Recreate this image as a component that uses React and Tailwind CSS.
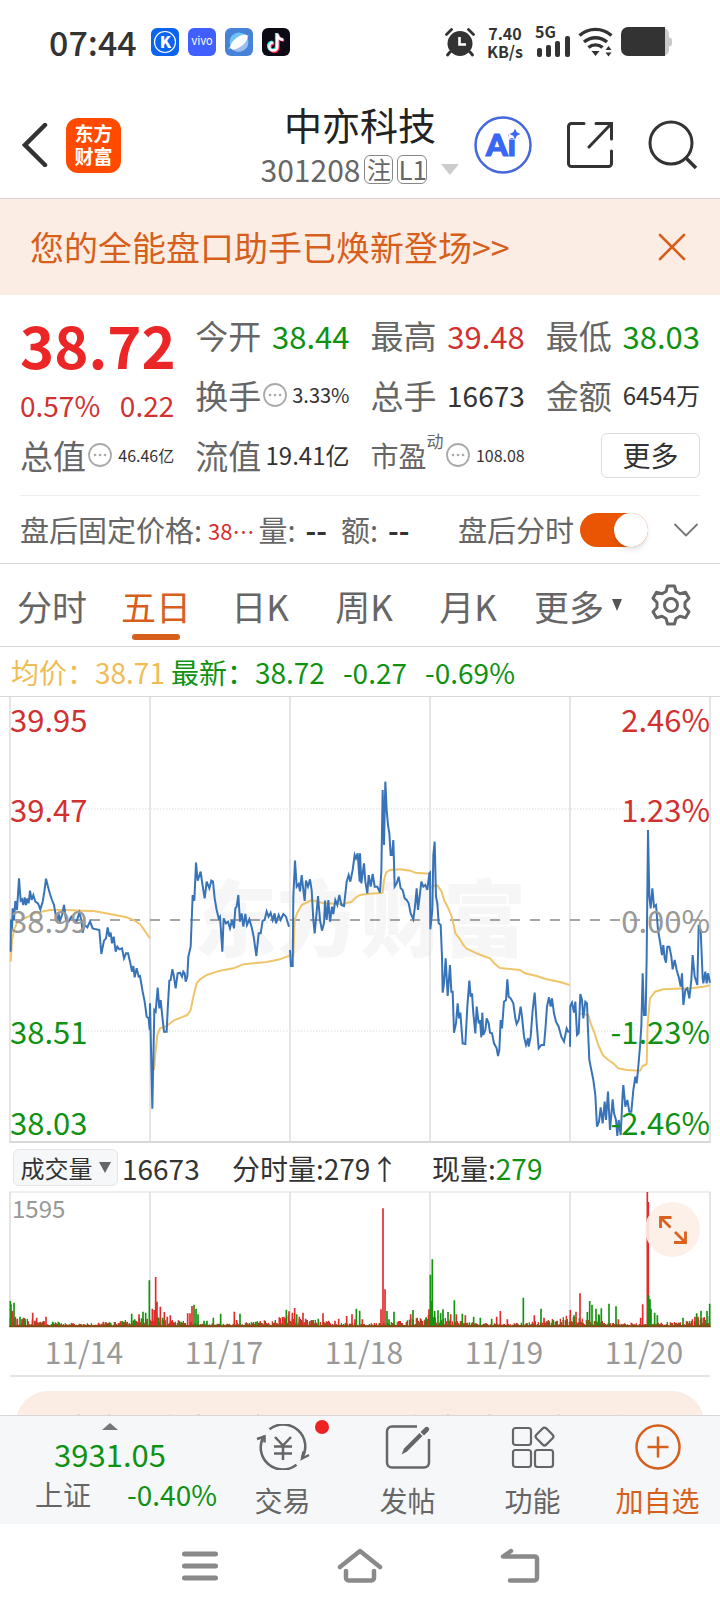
import { ChevronDown, X } from 'lucide-react';

const stats = [
  { label: '今开', value: '38.44', style: 'text-[31px] text-[#0f9212]' },
  { label: '最高', value: '39.48', style: 'text-[31px] text-[#d23131]' },
  { label: '最低', value: '38.03', style: 'text-[31px] text-[#0f9212]' },
  { label: '换手', value: '3.33%', style: 'text-[20px] text-[#333]', info: true },
  { label: '总手', value: '16673', style: 'text-[28px] text-[#333]' },
  { label: '金额', value: '6454万', style: 'text-[24px] text-[#333]' },
  { label: '总值', value: '46.46亿', style: 'text-[16px] text-[#333]', info: true },
  { label: '流值', value: '19.41亿', style: 'text-[24px] text-[#333]' },
];

const tabs = ['分时', '五日', '日K', '周K', '月K'];

const axis = [
  { price: '39.95', percent: '2.46%', style: 'text-[#d23131]' },
  { price: '39.47', percent: '1.23%', style: 'text-[#d23131]' },
  { price: '38.99', percent: '0.00%', style: 'text-[#999]' },
  { price: '38.51', percent: '-1.23%', style: 'text-[#0f9212]' },
  { price: '38.03', percent: '-2.46%', style: 'text-[#0f9212]' },
];

const dates = ['11/14', '11/17', '11/18', '11/19', '11/20'];

// five-day price, broken where the line has a gap between sessions
const priceLines = [
  '32,785 33,690 36,720 38,655 42,690 46,633 51,660 57,565 62,632 66,628 70,645 74,622 78,645 82,625 86,640 90,602 95,630 100,615 106,635 114,640 121,658 128,635 133,605 138,566 144,590 150,612 156,630 162,645 168,680 172,690 176,672 180,692 186,675 192,645 198,690 206,694 214,680 222,690 230,694 238,668 244,690 248,728 254,705 262,712 270,694 278,715 288,718 298,720 304,792 312,752 318,745 323,712 328,740 332,728 336,760 341,740 347,785 352,770 358,778 366,775 372,805 378,790 384,790 390,815 396,845 400,828 404,862 410,835 416,860 420,858 428,905 434,935 440,980 446,985 449,1020 450,940 457,1256 463,960 467,965 473,893 478,955 482,930 486,970 492,1025 500,1025 503,960 508,872 512,870 517,838 521,855 527,895 533,850 540,848 546,860 550,845 554,850 557,875 562,860 565,800 572,770 578,615 583,632 588,518 593,572 602,545 606,575 614,625 620,575 628,595 634,572 639,575 644,625 650,660 656,685 660,680 667,785 671,685 678,700 684,695 690,715 696,690 702,715 706,655 710,650 715,615 720,695 725,670 730,710 736,672 741,705 748,688 755,712 761,740 769,798 776,730 782,730 788,692 794,690 800,664 806,680 812,668 818,690 824,670 828,700 836,675 842,690 850,672 858,680 867,710',
  '870,780 873,828 878,828 880,620 885,512 890,590 896,582 900,604 905,555 910,600 914,633 918,572 924,590 930,568 935,600 940,690 944,730 950,665 954,618 960,690 966,722 972,700 975,632 980,690 985,630 990,695 996,650 1000,672 1006,630 1012,645 1018,615 1024,645 1032,648 1040,575 1046,555 1051,575 1058,540 1064,495 1068,505 1073,490 1079,575 1080,490 1084,580 1092,520 1096,575 1102,610 1106,555 1112,590 1118,552 1124,590 1132,590 1140,608 1144,545 1148,300 1152,465 1156,275 1160,360 1164,405 1168,430 1172,495 1176,495 1180,450 1184,590 1190,580 1196,560 1202,595 1208,600 1214,625 1220,630 1226,640 1232,670 1240,688 1246,640 1250,595 1254,660 1260,610 1264,575 1270,590 1276,585 1282,600 1288,550 1290,548 1291,718 1297,660 1300,495 1304,455 1308,620 1312,640 1316,700 1322,705 1326,800 1328,908 1332,880 1337,805 1343,918 1350,825 1354,905 1358,905 1362,1028 1368,1000 1373,940 1377,985 1381,968 1388,1060 1396,1062 1402,950 1408,872 1412,920 1416,910 1420,970 1426,1030 1430,950 1436,1000 1440,990 1444,1042 1447,968 1450,1035 1456,1020 1460,985 1466,1000 1470,1028 1476,1030 1482,1060 1490,1075 1494,1098 1498,1080 1502,990 1506,1015 1512,935 1518,930 1522,868 1526,920 1532,925 1540,940 1546,985 1550,1002 1556,990 1562,950 1566,980 1572,1040 1578,1065 1584,1045 1586,1070 1592,1040 1598,960 1604,908 1610,1000 1616,1075 1624,1065 1632,1065 1636,1020 1641,950 1647,922 1652,950 1656,925 1662,970 1668,995 1676,1010 1684,1040 1692,1055 1700,1015 1706,1028',
  '1710,1070 1711,948 1716,938 1722,968 1726,935 1731,1035 1736,1030 1741,912 1746,930 1750,985 1756,935 1761,940 1764,1020 1768,1110 1774,1140 1780,1170 1786,1215 1791,1310 1797,1295 1802,1252 1808,1300 1814,1235 1818,1290 1824,1205 1830,1320 1838,1228 1842,1270 1848,1290 1852,1338 1856,1290 1862,1335 1868,1210 1870,1185 1876,1250 1882,1230 1888,1265 1894,1265 1900,1200 1906,1160 1910,1180 1914,1140 1920,1070 1924,1010 1928,850 1932,975 1937,975 1940,800 1944,420 1948,620 1952,655 1957,595 1962,650 1968,645 1974,720 1980,755 1986,795 1990,765 1994,805 1998,818 2002,770 2008,770 2014,800 2018,838 2024,810 2030,840 2036,860 2042,890 2046,850 2050,945 2056,900 2062,895 2068,925 2074,870 2078,795 2084,860 2092,885 2096,705 2102,720 2108,865 2110,880 2116,845 2120,880 2124,850 2130,878',
];

const averageLines = [
  '32,815 36,750 42,720 50,700 62,690 80,682 110,668 150,660 200,660 250,662 280,663 330,672 380,682 400,690 420,702 436,725 450,745',
  '462,1140 466,1090 472,1035 480,1015 500,1008 520,992 550,980 562,975 572,960 580,920 590,880 600,868 620,855 660,842 700,835 730,823 800,816 840,808 868,797',
  '880,800 884,690 892,668 905,645 935,630 970,640 1030,642 1055,635 1068,622 1080,615 1100,612 1148,608 1152,570 1158,548 1170,540 1200,538 1230,542 1245,548 1290,551',
  '1292,590 1300,588 1312,586 1325,605 1332,630 1345,655 1355,680 1362,710 1366,730 1378,745 1390,765 1400,776 1430,790 1450,798 1470,805 1485,822 1500,834 1560,840 1575,850 1610,858 1640,868 1680,876 1709,885',
  '1742,972 1765,975 1772,1000 1782,1025 1795,1065 1808,1095 1825,1110 1840,1120 1855,1135 1880,1140 1920,1142 1928,1128 1940,1122 1943,1000 1950,925 1965,905 1990,898 2080,894 2110,890 2130,886',
];

// x,top of the taller volume bars
const redBars =
  '33,375 38,395 46,412 52,418 66,420 98,400 110,415 138,412 215,431 252,434 296,430 310,427 417,405 441,420 457,388 463,392 467,293 471,367 481,382 493,398 502,412 511,408 517,425 563,402 570,402 576,380 703,397 710,422 796,430 826,428 838,414 852,412 867,396 877,400 884,386 898,412 909,400 917,418 930,425 969,402 986,424 1005,424 1016,418 1040,410 1056,405 1065,420 1087,420 1115,434 1143,390 1149,87 1155,330 1196,425 1232,405 1287,390 1294,365 1352,405 1369,405 1396,408 1490,412 1501,395 1522,420 1603,408 1632,415 1690,422 1711,392 1728,397 1740,342 1798,408 1855,420 1894,430 1922,415 1928,375 1942,38 1945,68 1984,430 2085,412 2094,412 2110,415';
const greenBars =
  '31,365 42,370 60,412 75,418 158,427 175,427 332,430 366,425 395,403 404,420 429,397 437,400 448,303 476,415 488,415 543,427 582,376 588,388 594,405 612,424 621,424 640,415 662,403 720,403 768,427 859,391 890,405 955,418 1069,388 1079,394 1161,395 1167,420 1182,397 1239,392 1278,415 1291,286 1297,240 1304,395 1314,393 1322,402 1329,390 1344,398 1363,363 1387,403 1421,412 1441,415 1475,418 1570,355 1623,388 1660,422 1722,408 1762,398 1769,365 1776,376 1788,388 1796,405 1804,387 1827,373 1848,381 1946,348 1950,360 1953,388 1964,400 1972,408 2049,415 2090,402 2103,394 2121,395 2129,373';

const barPath = (bars) => bars.split(' ').map((p) => `M${p.replace(',', ' ')}V443`).join('');

// small trades between the tall bars, heavier around open and close
const minorPath = (seed) => {
  let d = '';
  for (let x = 31 + seed * 3; x < 2130; x += 6) {
    const day = ((x - 30) % 420) / 420;
    const busy = 7 + 26 * (day - 0.5) ** 2 * 4;
    const n = Math.abs(Math.sin(x * 12.9898 + seed * 4) * 43758.5453) % 1;
    d += `M${x} ${Math.round(439 - n * busy)}V443`;
  }
  return d;
};

const InfoIcon = () => (
  <svg viewBox="0 0 24 24" className="w-6 h-6 ml-0.5 flex-shrink-0" fill="none" stroke="#aaa">
    <circle cx="12" cy="12" r="11" strokeWidth="1.8" />
    <path d="M7 12h.1M12 12h.1M17 12h.1" strokeWidth="2.6" strokeLinecap="round" />
  </svg>
);

const StatusBar = () => (
  <div className="flex items-center h-[84px] pl-[49px] pr-12 text-[#333]">
    <span className="text-[34px] font-medium leading-none mr-3.5">07:44</span>
    <div className="flex gap-[9px]">
      <svg viewBox="0 0 28 28" className="w-7 h-7">
        <rect width="28" height="28" rx="6" fill="#0b63ee" />
        <circle cx="14" cy="14" r="10.5" fill="none" stroke="#fff" strokeWidth="1.2" />
        <text x="14.5" y="20" textAnchor="middle" fontSize="16" fontWeight="900" fill="#fff">K</text>
      </svg>
      <svg viewBox="0 0 28 28" className="w-7 h-7">
        <rect width="28" height="28" rx="6" fill="#415fff" />
        <text x="14" y="17" textAnchor="middle" fontSize="11" fill="#fff" fontFamily="Inter">vivo</text>
      </svg>
      <svg viewBox="0 0 28 28" className="w-7 h-7">
        <rect width="28" height="28" rx="6" fill="#4682d8" />
        <circle cx="14" cy="14" r="9.5" fill="#6fc3f5" />
        <path d="M6 20a9.5 9.5 0 0 0 17-6z" fill="#9dbdf0" />
        <path d="M3 21c4 0 16-7 21-14-5 1-17 7-21 14z" fill="#9dbdf0" />
        <ellipse cx="14" cy="14" rx="10.5" ry="4.8" transform="rotate(-38 14 14)" fill="#fff" />
      </svg>
      <svg viewBox="0 0 28 28" className="w-7 h-7" fill="none" strokeWidth="3">
        <rect width="28" height="28" rx="6" fill="#0c0a14" />
        <path d="M14.4 5v13a4 4 0 1 1-4-4M14.4 6c.6 3 2.6 5 6 5.3" stroke="#25f4ee" />
        <path d="M16.2 6.5v13a4 4 0 1 1-4-4M16.2 7c.6 3 2.6 5 6 5.3" stroke="#fe2c55" />
        <path d="M15.3 5.5v13a4 4 0 1 1-4-4M15.3 6.5c.6 3 2.6 5 6 5.3" stroke="#fff" strokeWidth="2.6" />
      </svg>
    </div>
    <div className="flex items-center gap-[7px] ml-auto">
      <svg viewBox="0 0 30 30" className="w-[30px] h-[30px]">
        <circle cx="15" cy="16.5" r="12.5" fill="#333" />
        <path d="M1.5 7.500l5-5M28.5 7.500l-5-5M5 25l-2.500 3M25 25l2.500 3" stroke="#333" strokeWidth="2.8" strokeLinecap="round" />
        <path d="M14.5 10v7.500h6.500" fill="none" stroke="#fff" strokeWidth="2.6" />
      </svg>
      <div className="w-[46px] text-center text-[16px] font-bold leading-[18px]">
        7.40
        <br />
        KB/s
      </div>
      <svg viewBox="0 0 36 32" className="w-9 h-8 overflow-visible" fill="#333">
        <text x="0" y="12" fontSize="16" fontWeight="700">5G</text>
        <rect x="2" y="22" width="5" height="9" rx="2" />
        <rect x="11" y="19" width="5" height="12" rx="2" />
        <rect x="20" y="15" width="5" height="16" rx="2" />
        <rect x="30" y="10" width="5" height="21" rx="2" />
      </svg>
      <svg viewBox="0 0 36 30" className="w-9 h-[30px]" fill="none" stroke="#333" strokeWidth="3.4">
        <path d="M1.500 8.500a24 24 0 0 1 32 0M6 15a17.500 17.500 0 0 1 23 0M10.500 20.500a10.500 10.500 0 0 1 14 0" />
        <path d="M13.500 24h8l-4 5zM27.500 23l3-4 3 4zM27.500 25.500l3 4 3-4z" fill="#333" stroke="none" />
      </svg>
      <svg viewBox="0 0 51 30" className="w-[51px] h-[30px]">
        <path d="M42 1a6 6 0 0 1 6 6v3.500a3 3 0 0 1 3 3v3a3 3 0 0 1-3 3V23a6 6 0 0 1-6 6z" fill="#c9c9c9" />
        <path d="M7 0h37v29H7a7 7 0 0 1-7-7V7a7 7 0 0 1 7-7z" fill="#333" />
      </svg>
    </div>
  </div>
);

const Header = () => (
  <header className="flex items-center h-[115px] pt-2 px-[22px] border-b border-[#ddd6d4]">
    <div className="flex flex-1 items-center gap-[18px]">
      <button aria-label="返回">
        <svg viewBox="0 0 26 44" className="w-[26px] h-11" fill="none" stroke="#333" strokeWidth="4.5">
          <path d="M23 2L3 22l20 20" strokeLinecap="round" />
        </svg>
      </button>
      <div className="w-[55px] h-[55px] rounded-xl bg-[#ff4a00] text-white text-[19px] font-bold leading-[23px] text-center pt-[3px]">
        东方
        <br />
        财富
      </div>
    </div>
    <div className="text-center">
      <h1 className="text-[38px] leading-[42px] text-[#222] mb-1.5">中亦科技</h1>
      <div className="flex items-center text-[30px] leading-9 text-[#666]">
        <span>301208</span>
        <span className="w-[29px] h-[29px] ml-1 border border-[#888] rounded-md text-[24px] leading-[26px]">注</span>
        <span className="w-[30px] h-[29px] ml-1 border border-[#888] rounded-md text-[26px] leading-[26px]">L1</span>
        <svg viewBox="0 0 18 11" className="w-[18px] h-[11px] ml-3.5" fill="#ccc">
          <path d="M0 0h18l-9 11z" />
        </svg>
      </div>
    </div>
    <div className="flex flex-1 items-center justify-end gap-[35px]">
      <button aria-label="AI助手">
        <svg viewBox="0 0 58 58" className="w-[58px] h-[58px]" fill="#3a66f5">
          <circle cx="29" cy="29" r="27.5" fill="none" stroke="#4568dd" strokeWidth="2.5" />
          <text x="12" y="40" fontSize="31" fontWeight="900" stroke="#3a66f5" strokeWidth="1.2" fontFamily="Lato">Ai</text>
          <path d="M35 10h12v12H35z" fill="#fff" />
          <path d="M41 12.500l1.700 3.800 3.800 1.700-3.800 1.700-1.700 3.800-1.700-3.800-3.800-1.700 3.800-1.700z" />
        </svg>
      </button>
      <button aria-label="分享">
        <svg viewBox="0 0 46 46" className="w-[46px] h-[46px]" fill="none" stroke="#333" strokeWidth="3" strokeLinecap="round">
          <path d="M17 1.500H4.500a3 3 0 0 0-3 3v37a3 3 0 0 0 3 3h37a3 3 0 0 0 3-3V29M29 1.500h15.500V17M44 2L22 25" />
        </svg>
      </button>
      <button aria-label="搜索">
        <svg viewBox="0 0 50 50" className="w-[50px] h-[50px]" fill="none" stroke="#333" strokeWidth="3">
          <circle cx="23" cy="23" r="21" />
          <path d="M38 38l10 10" strokeWidth="3.5" />
        </svg>
      </button>
    </div>
  </header>
);

const Banner = () => (
  <div className="flex items-center justify-between h-24 pl-[30px] pr-6 bg-[#fcede4] text-[#d65f1c]">
    <a href="#assistant" className="text-[34px] leading-none">您的全能盘口助手已焕新登场&gt;&gt;</a>
    <button aria-label="关闭">
      <X size={48} strokeWidth={1.3} />
    </button>
  </div>
);

const StatCell = ({ stat }) => (
  <div className="flex items-center min-w-0 leading-none whitespace-nowrap">
    <span className="text-[33px] text-[#666]">{stat.label}</span>
    {stat.info && <InfoIcon />}
    <span className={`ml-auto ${stat.style}`}>{stat.value}</span>
  </div>
);

const Quote = () => (
  <section className="px-5">
    <div className="grid grid-cols-4 grid-rows-[60px_60px_60px] gap-x-[21px] pt-2.5 pb-2.5">
      <div className="row-span-2 text-[#d23131] leading-none whitespace-nowrap">
        <div className="h-[78px] flex items-center text-[58px] font-bold text-[#ec2626]">38.72</div>
        <div className="flex justify-between text-[28px] pt-2">
          <span>0.57%</span>
          <span>0.22</span>
        </div>
      </div>
      {stats.map((stat) => (
        <StatCell key={stat.label} stat={stat} />
      ))}
      <div className="flex items-center leading-none whitespace-nowrap text-[#666]">
        <span className="text-[28px]">市盈</span>
        <sup className="self-start text-[17px] pt-6">动</sup>
        <InfoIcon />
        <span className="ml-auto text-[16px] text-[#333]">108.08</span>
      </div>
      <button className="self-center justify-self-end w-[99px] h-[45px] border border-[#ddd] rounded-md text-[28px] leading-none text-[#333]">
        更多
      </button>
    </div>
    <div className="flex items-center h-[68px] border-t border-[#eee] text-[29px] leading-none text-[#666] whitespace-nowrap">
      <span>盘后固定价格:</span>
      <span className="ml-1.5 text-[22px] text-[#d23131]">38⋯</span>
      <span className="ml-1">量:</span>
      <span className="ml-2.5 font-bold text-[#333]">--</span>
      <span className="ml-3.5">额:</span>
      <span className="ml-2.5 font-bold text-[#333]">--</span>
      <label htmlFor="after-hours" className="ml-auto">盘后分时</label>
      <span className="relative ml-1.5 w-[68px] h-[34px] flex-shrink-0">
        <input
          id="after-hours"
          type="checkbox"
          defaultChecked
          className="peer appearance-none block w-full h-full rounded-full bg-[#ccc] checked:bg-[#ea5504]"
        />
        <span className="absolute top-0 left-0 peer-checked:left-[34px] w-[34px] h-[34px] rounded-full bg-white shadow-md pointer-events-none" />
      </span>
      <button aria-label="展开" className="ml-4 -mr-2">
        <ChevronDown size={44} strokeWidth={1} className="text-[#777]" />
      </button>
    </div>
  </section>
);

const Tabs = () => (
  <nav className="grid grid-cols-[repeat(5,26fr)_29fr_21fr] h-[84px] border-y border-[#d8d8d8] text-[35px] leading-none text-[#666]">
    {tabs.map((tab) => (
      <button key={tab} className={tab === '五日' ? 'relative text-[#d65f1c]' : ''}>
        {tab}
        {tab === '五日' && (
          <span className="absolute bottom-1.5 left-1/2 -translate-x-1/2 w-12 h-[6px] rounded-full bg-[#d65f1c]" />
        )}
      </button>
    ))}
    <button className="flex items-center justify-center gap-2">
      更多
      <svg viewBox="0 0 10 12" className="w-2.5 h-3" fill="#555">
        <path d="M0 0h10L5 12z" />
      </svg>
    </button>
    <button aria-label="设置" className="flex items-center justify-center pr-3.5">
      <svg viewBox="0 0 42 42" className="w-[42px] h-[42px]" fill="none" stroke="#666" strokeWidth="3" strokeLinejoin="round">
        <path d="M17.500 2h7l1.500 5.500 4 2.300 5.500-1.500 3.500 6-4 4.200v5l4 4.200-3.500 6-5.500-1.500-4 2.300-1.500 5.500h-7L16 34.500l-4-2.300-5.500 1.500-3.500-6 4-4.200v-5l-4-4.200 3.500-6L12 9.800l4-2.300z" />
        <circle cx="21" cy="21" r="6.5" />
      </svg>
    </button>
  </nav>
);

const PriceChart = () => (
  <div className="relative h-[446px] mx-2.5">
    <div className="absolute inset-0 flex items-center justify-center pb-3 text-[83px] font-black leading-none text-[#f6f6f6]">
      东方财富
    </div>
    <svg viewBox="30 21 2100 1338" preserveAspectRatio="none" className="absolute inset-0 w-full h-full overflow-visible" fill="none">
      <path d="M30 21V1356M450 21V1356M870 21V1356M1290 21V1356M1710 21V1356M2130 21V1356" stroke="#e0e0e0" strokeWidth="5" />
      <path d="M28 1356H2132" stroke="#d8d8d8" strokeWidth="6" />
      <path d="M30 357H2130M30 1023H2130" stroke="#e6e6e6" strokeWidth="5" strokeDasharray="4 5" />
      <path d="M30 690H2130" stroke="#888" strokeWidth="5" strokeDasharray="30 30" />
      {averageLines.map((points) => (
        <polyline key={points} points={points} stroke="#f0c468" strokeWidth="6" strokeLinejoin="round" />
      ))}
      {priceLines.map((points) => (
        <polyline key={points} points={points} stroke="#3873b8" strokeWidth="6" />
      ))}
    </svg>
    <div className="absolute inset-0 grid grid-rows-[90px_111px_111px_91px_36px] pt-1">
      {axis.map((row) => (
        <div key={row.price} className={`flex justify-between text-[31px] leading-9 ${row.style}`}>
          <span>{row.price}</span>
          <span>{row.percent}</span>
        </div>
      ))}
    </div>
  </div>
);

const VolumeChart = () => (
  <div className="relative h-[135px] mx-2.5">
    <svg viewBox="30 38 2100 405" preserveAspectRatio="none" className="absolute inset-0 w-full h-full overflow-visible" fill="none" strokeWidth="5">
      <path d="M30 38V443M450 38V443M870 38V443M1290 38V443M1710 38V443M2130 38V443" stroke="#e0e0e0" />
      <path d="M28 38H2132" stroke="#dedede" strokeWidth="3" />
      <path d={minorPath(0)} stroke="#e32b2b" strokeWidth="4" />
      <path d={minorPath(1)} stroke="#15930f" strokeWidth="4" />
      <path d={barPath(redBars)} stroke="#e32b2b" />
      <path d={barPath(greenBars)} stroke="#15930f" />
      <path d="M28 441H2132" stroke="#7a4a10" strokeWidth="5" />
    </svg>
    <span className="absolute top-1 left-0.5 text-[24px] leading-6 text-[#999]">1595</span>
    <button aria-label="全屏" className="absolute top-2.5 right-2.5 w-[55px] h-[55px] rounded-full bg-[#fdeee6]/90">
      <svg viewBox="0 0 55 55" className="w-full h-full" fill="none" stroke="#d9621f" strokeWidth="2.8">
        <path d="M15.500 26V15.500H26.500M16 16l9.500 9.500M40.500 29.500V40.500H29M40 40L30 30" />
      </svg>
    </button>
  </div>
);

const NavItem = ({ label, className = 'text-[#666]', children }) => (
  <button className={`flex flex-col items-center gap-3.5 pt-2 text-[28px] leading-8 ${className}`}>
    {children}
    {label}
  </button>
);

const BottomNav = () => (
  <nav className="grid grid-cols-[220fr_125fr_125fr_125fr_125fr] h-[109px] border-t border-[#d8d8d8] bg-[#f6f7f9]">
    <a href="#index" className="flex flex-col items-center pt-[7px] text-[#0f9212]">
      <svg viewBox="0 0 16 7" className="w-4 h-[7px]" fill="#777">
        <path d="M0 7l8-7 8 7z" />
      </svg>
      <span className="text-[31px] leading-10 mt-1">3931.05</span>
      <span className="flex gap-9 pl-8 text-[28px] leading-10">
        <span className="text-[#666]">上证</span>
        -0.40%
      </span>
    </a>
    <NavItem label="交易">
      <span className="relative">
        <svg viewBox="0 0 54 46" className="w-[54px] h-[46px]" fill="none" stroke="#666" strokeWidth="2.5">
          <path d="M13.500 5.300A22 22 0 0 1 46 34M8 12A22 22 0 0 0 40.500 40.700" />
          <path d="M1 15l7.500-2.500v6M53 31l-7 3.500 1.500-7" />
          <path d="M19 13l8 8.500 8-8.500M18 22.500h18M18 29.500h18M27 22v14" />
        </svg>
        <span className="absolute -top-1 -right-[19px] w-3.5 h-3.5 rounded-full bg-[#ee2222]" />
      </span>
    </NavItem>
    <NavItem label="发帖">
      <svg viewBox="0 0 46 46" className="w-[46px] h-[46px]" fill="none" stroke="#666" strokeWidth="2.5">
        <path d="M32 2.500H7A5 5 0 0 0 2 7.500v31a5 5 0 0 0 5 5h32a5 5 0 0 0 5-5V15" />
        <path d="M16.500 30.500l2.500-6 15.500-15.500 3 3L22 27.500z" fill="#666" stroke="none" />
        <path d="M35.500 8l4.500-4.500a2 2 0 0 1 3.500 3.500L39 11.500z" fill="#666" stroke="none" />
      </svg>
    </NavItem>
    <NavItem label="功能">
      <svg viewBox="0 0 46 46" className="w-[46px] h-[46px]" fill="none" stroke="#666" strokeWidth="2.2">
        <rect x="3" y="4" width="18" height="17" rx="2.5" />
        <rect x="3" y="26" width="18" height="17" rx="2.5" />
        <rect x="25" y="26" width="18" height="17" rx="2.5" />
        <rect x="27.5" y="5.5" width="14" height="14" rx="2.5" transform="rotate(45 34.5 12.5)" />
      </svg>
    </NavItem>
    <NavItem label="加自选" className="text-[#d65f1c]">
      <svg viewBox="0 0 46 46" className="w-[46px] h-[46px]" fill="none" stroke="#d65f1c" strokeWidth="2.5">
        <circle cx="23" cy="23" r="21.5" />
        <path d="M23 12.500v21M12.500 23h21" />
      </svg>
    </NavItem>
  </nav>
);

const SystemNav = () => (
  <div className="grid grid-cols-3 justify-items-center items-center h-[84px] px-[120px]">
    <button aria-label="最近任务">
      <svg viewBox="0 0 36 36" className="w-9 h-9" stroke="#8a8a8a" strokeWidth="5" strokeLinecap="round">
        <path d="M2.500 6h31M2.500 18h31M2.500 30h31" />
      </svg>
    </button>
    <button aria-label="主屏幕">
      <svg viewBox="0 0 46 36" className="w-[46px] h-9" fill="none" stroke="#8a8a8a" strokeWidth="4.5" strokeLinecap="round" strokeLinejoin="round">
        <path d="M3 19L23 3l20 16M9 23v7a2.500 2.500 0 0 0 2.500 2.500h23A2.500 2.500 0 0 0 37 30v-7" />
      </svg>
    </button>
    <button aria-label="后退">
      <svg viewBox="0 0 40 36" className="w-10 h-9" fill="none" stroke="#8a8a8a" strokeWidth="4.5" strokeLinecap="round" strokeLinejoin="round">
        <path d="M11 3L3 8.500h32a2 2 0 0 1 2 2V30a2.500 2.500 0 0 1-2.500 2.500H10" />
      </svg>
    </button>
  </div>
);

const App = () => (
  <div className="bg-white font-['Noto_Sans_CJK_SC',sans-serif] overflow-hidden">
    <StatusBar />
    <Header />
    <Banner />
    <Quote />
    <Tabs />

    <div className="flex items-center h-[50px] pl-[11px] border-b border-[#d8d8d8] text-[28px] leading-none whitespace-nowrap text-[#0f9212]">
      <span className="mr-1.5 text-[#f0bc55]">均价：38.71</span>
      <span className="mr-[18px]">最新：38.72</span>
      <span className="mr-[18px]">-0.27</span>
      <span>-0.69%</span>
    </div>
    <PriceChart />

    <div className="flex items-center h-[49px] pl-[13px] text-[28px] leading-none whitespace-nowrap text-[#333]">
      <button className="flex items-center justify-center gap-1.5 w-[105px] h-[37px] mr-1 border border-[#e4e6ea] rounded-md bg-[#f6f7f9] text-[24px]">
        成交量
        <svg viewBox="0 0 12 11" className="w-3 h-[11px]" fill="#666">
          <path d="M0 0h12L6 11z" />
        </svg>
      </button>
      <span className="w-[110px]">16673</span>
      <span className="w-[200px]">分时量:279↑</span>
      <span>
        现量:<span className="text-[#0f9212]">279</span>
      </span>
    </div>
    <VolumeChart />
    <div className="grid grid-cols-5 h-[50px] mx-2.5 border-b-2 border-[#e4e4e4] text-center text-[30px] leading-[48px] text-[#999]">
      {dates.map((date) => (
        <span key={date} className="pl-2">{date}</span>
      ))}
    </div>

    <div className="h-[38px] pt-3.5 px-4 overflow-hidden">
      <div className="h-16 pt-5 pl-12 rounded-[32px] bg-[#fcede4] text-[30px] leading-8 text-[#d65f1c] whitespace-nowrap">
        点击开启盘后交易提醒，随时掌握资金动向
      </div>
    </div>
    <BottomNav />
    <SystemNav />
  </div>
);

export default App;
